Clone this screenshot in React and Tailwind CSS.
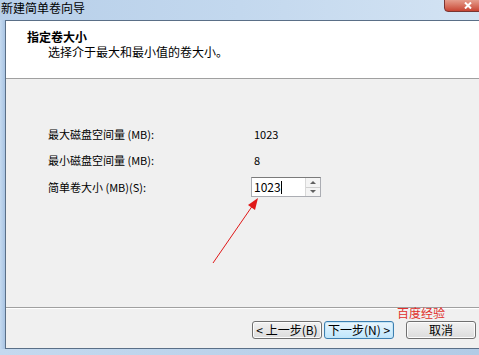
const FONT = { fontFamily: '"SimSun", "Noto Sans CJK SC", "Liberation Sans", sans-serif' };

const ROWS = [
  { label: "最大磁盘空间量 (MB):", value: "1023" },
  { label: "最小磁盘空间量 (MB):", value: "8" },
];

const Button = ({ children, active }) => (
  <div
    className={`w-[70px] h-[18px] flex items-center justify-center text-[12px] text-black rounded-[3px] border ${
      active
        ? "border-[#3c7fb1] bg-gradient-to-b from-[#eaf6fd] to-[#bee6fd] shadow-[inset_0_0_0_1px_#c4e5f6]"
        : "border-[#707070] bg-gradient-to-b from-[#f2f2f2] to-[#dcdcdc] shadow-[inset_0_0_0_1px_#fcfcfc]"
    }`}
  >
    {children}
  </div>
);

const App = () => {
  return (
    <div
      className="relative w-[479px] h-[355px] overflow-hidden flex flex-col bg-[#c0d6ee]"
      style={FONT}
    >
      {/* title bar */}
      <div className="h-[20px] shrink-0 bg-gradient-to-r from-[#b7cfe9] via-[#c3d8ee] to-[#d3e3f3] relative">
        <div className="absolute left-[1px] top-0 text-[12px] leading-[15px] text-black">
          新建简单卷向导
        </div>
        <div className="absolute left-[444px] -top-[2px] w-[46px] h-[14px] rounded-bl-[4px] border border-[#7a3532] bg-gradient-to-b from-[#e7a494] to-[#c74433]">
          <svg className="absolute left-[19px] top-[3px]" width="8" height="7" viewBox="0 0 8 7">
            <path d="M1 0.5 L7 6.5 M7 0.5 L1 6.5" stroke="#fff" strokeWidth="2" />
          </svg>
        </div>
      </div>

      <div className="flex-1 flex">
        <div className="w-[5px] shrink-0 bg-gradient-to-r from-[#c5daf0] to-[#a9c4e3]" />
        <div className="flex-1 flex flex-col border-l border-t border-b border-[#5a6f87] bg-[#f0f0f0]">
          {/* header */}
          <div className="h-[58px] shrink-0 bg-white border-b border-[#a0a0a0] pl-[21px] pt-[9px]">
            <div className="text-[12px] leading-[14px] font-bold text-black">指定卷大小</div>
            <div className="text-[12px] leading-[14px] text-black mt-[1px] pl-[21px]">
              选择介于最大和最小值的卷大小。
            </div>
          </div>

          {/* body */}
          <div className="flex-1 flex flex-col pl-[42px] pt-[42px] border-b border-[#a0a0a0]">
            {ROWS.map((r) => (
              <div key={r.label} className="h-[26px] flex items-center text-[11px] text-black">
                <span className="w-[203px]">{r.label}</span>
                <span className="pl-[3px]">{r.value}</span>
              </div>
            ))}
            <div className="h-[26px] mt-[1px] flex items-center text-[11px] text-black">
              <span className="w-[203px]">简单卷大小 (MB)(S):</span>
              <div className="w-[70px] h-[20px] flex border border-[#abadb3] border-t-[#7a7a7a] bg-white">
                <div className="flex-1 flex items-center pl-[2px] text-[12px]">
                  1023<span className="w-px h-[13px] bg-black" />
                </div>
                <div className="w-[15px] flex flex-col border-l border-[#d8d8d8] bg-[#f4f4f4]">
                  <div className="flex-1 flex items-center justify-center border-b border-[#d0d0d0]">
                    <span className="w-0 h-0 border-x-[3px] border-x-transparent border-b-[3px] border-b-[#606060]" />
                  </div>
                  <div className="flex-1 flex items-center justify-center">
                    <span className="w-0 h-0 border-x-[3px] border-x-transparent border-t-[3px] border-t-[#606060]" />
                  </div>
                </div>
              </div>
            </div>
          </div>

          {/* buttons */}
          <div className="h-[40px] shrink-0 border-t border-white flex items-center pl-[246px] pt-[2px]">
            <Button>&lt; 上一步(B)</Button>
            <div className="ml-[2px]">
              <Button active>下一步(N) &gt;</Button>
            </div>
            <div className="ml-[12px]">
              <Button>取消</Button>
            </div>
          </div>
        </div>
      </div>
      <div className="h-[6px] shrink-0 bg-gradient-to-r from-[#c4d9ef] to-[#b2cbe6]" />

      {/* watermark */}
      <div className="absolute left-[397px] top-[306px] text-[12px] leading-[14px] text-[#e0302c]">
        百度经验
      </div>

      {/* annotation arrow */}
      <svg className="absolute left-0 top-0" width="479" height="355">
        <line x1="213" y1="263" x2="253" y2="205" stroke="#e01818" strokeWidth="1" />
        <polygon points="258,198 248,205 255,210" fill="#e01818" />
      </svg>
    </div>
  );
};

export default App;
